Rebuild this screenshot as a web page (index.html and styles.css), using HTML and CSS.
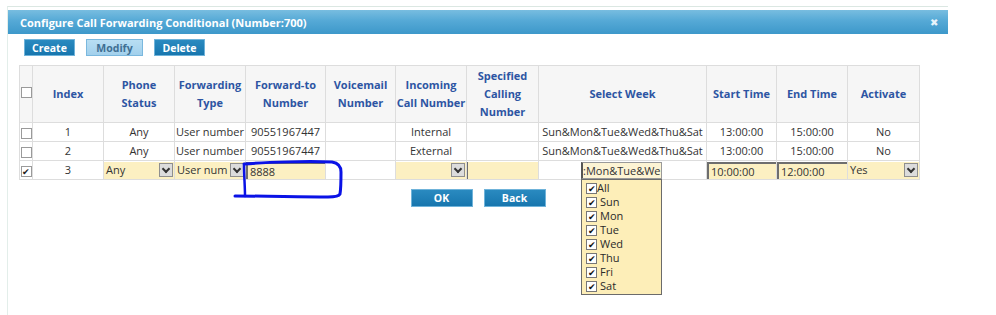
FILE: index.html
```html
<!DOCTYPE html>
<html lang="en">
<head>
    <meta charset="UTF-8">
    <title>Configure Call Forwarding Conditional</title>
    <link rel="stylesheet" href="styles.css">
</head>
<body>

    <div class="dialog">
        <div class="title-bar">
            <span class="title">Configure Call Forwarding Conditional (Number:700)</span>
            <span class="close">&#x2716;</span>
        </div>

        <div class="toolbar">
            <button class="btn">Create</button>
            <button class="btn btn-active">Modify</button>
            <button class="btn">Delete</button>
        </div>

        <table class="grid">
            <colgroup>
                <col style="width:13px"><col style="width:71px"><col style="width:71px">
                <col style="width:71px"><col style="width:80px"><col style="width:70px">
                <col style="width:71px"><col style="width:72px"><col style="width:168px">
                <col style="width:70px"><col style="width:71px"><col style="width:72px">
            </colgroup>
            <thead>
                <tr>
                    <th class="chk-cell"><span class="box"></span></th>
                    <th>Index</th>
                    <th>Phone<br>Status</th>
                    <th>Forwarding<br>Type</th>
                    <th>Forward-to<br>Number</th>
                    <th>Voicemail<br>Number</th>
                    <th>Incoming<br>Call Number</th>
                    <th>Specified<br>Calling<br>Number</th>
                    <th>Select Week</th>
                    <th>Start Time</th>
                    <th>End Time</th>
                    <th>Activate</th>
                </tr>
            </thead>
            <tbody>
                <tr>
                    <td class="chk-cell"><span class="box"></span></td>
                    <td>1</td>
                    <td>Any</td>
                    <td>User number</td>
                    <td>90551967447</td>
                    <td></td>
                    <td>Internal</td>
                    <td></td>
                    <td>Sun&amp;Mon&amp;Tue&amp;Wed&amp;Thu&amp;Sat</td>
                    <td>13:00:00</td>
                    <td>15:00:00</td>
                    <td>No</td>
                </tr>
                <tr>
                    <td class="chk-cell"><span class="box"></span></td>
                    <td>2</td>
                    <td>Any</td>
                    <td>User number</td>
                    <td>90551967447</td>
                    <td></td>
                    <td>External</td>
                    <td></td>
                    <td>Sun&amp;Mon&amp;Tue&amp;Wed&amp;Thu&amp;Sat</td>
                    <td>13:00:00</td>
                    <td>15:00:00</td>
                    <td>No</td>
                </tr>
                <tr class="edit-row">
                    <td class="chk-cell"><span class="box checked">&#x2714;</span></td>
                    <td>3</td>
                    <td class="ed"><div class="sel"><span class="sel-text">Any</span><span class="arrow"></span></div></td>
                    <td class="ed"><div class="sel"><span class="sel-text">User num</span><span class="arrow"></span></div></td>
                    <td class="ed"><div class="field">8888</div></td>
                    <td class="ed"></td>
                    <td class="ed"><div class="sel"><span class="sel-text"></span><span class="arrow"></span></div></td>
                    <td class="ed"><div class="field flat"></div></td>
                    <td class="ed week-cell">
                        <div class="week-field">:Mon&amp;Tue&amp;We</div>
                        <div class="week-list">
                            <label class="week-item first"><span class="tick">&#x2714;</span>All</label>
                            <label class="week-item"><span class="tick">&#x2714;</span>Sun</label>
                            <label class="week-item"><span class="tick">&#x2714;</span>Mon</label>
                            <label class="week-item"><span class="tick">&#x2714;</span>Tue</label>
                            <label class="week-item"><span class="tick">&#x2714;</span>Wed</label>
                            <label class="week-item"><span class="tick">&#x2714;</span>Thu</label>
                            <label class="week-item"><span class="tick">&#x2714;</span>Fri</label>
                            <label class="week-item"><span class="tick">&#x2714;</span>Sat</label>
                        </div>
                    </td>
                    <td class="ed"><div class="field">10:00:00</div></td>
                    <td class="ed"><div class="field">12:00:00</div></td>
                    <td class="ed"><div class="sel"><span class="sel-text">Yes</span><span class="arrow"></span></div></td>
                </tr>
            </tbody>
        </table>

        <div class="actions">
            <button class="btn btn-wide">OK</button>
            <button class="btn btn-wide">Back</button>
        </div>

        <!-- annotation drawn over the screenshot -->
        <svg class="scribble" width="120" height="45" viewBox="0 0 120 45">
            <path d="M16 6 C40 4 80 3 104 4 C110 5 113 8 113 14 C113 22 113 30 112 36 C111 38 108 39 100 39 C70 39 40 38 7 38"
                  fill="none" stroke="#0a12e6" stroke-width="3" stroke-linecap="round"/>
            <path d="M16 7 C16 18 17 28 17 38" fill="none" stroke="#0a12e6" stroke-width="2.5" stroke-linecap="round"/>
        </svg>
    </div>

</body>
</html>
```

FILE: styles.css
```css
/* Page */
body {
    margin: 0;
    font-family: "Open Sans", "Liberation Sans", sans-serif;
    font-size: 11px;
    color: #333333;
    background: #ffffff;
}

.dialog {
    position: relative;
    margin: 6px 0 0 7px;
    width: 941px;
    height: 309px;
    box-sizing: border-box;
    border-top: 1px solid #dbe7e2;
    border-left: 1px solid #e3eeea;
    padding-top: 3px;
}

/* Title bar */
.title-bar {
    height: 24px;
    display: flex;
    align-items: center;
    justify-content: space-between;
    padding: 0 10px 0 12px;
    background: linear-gradient(180deg, #78bde0 0%, #55a9d6 45%, #3d98ca 100%);
    color: #ffffff;
}

.title {
    font-weight: 700;
    font-size: 11px;
}

.close {
    font-size: 10px;
    color: #e8f4fb;
}

/* Buttons */
.toolbar {
    display: flex;
    gap: 11px;
    padding: 5px 0 0 16px;
    height: 17px;
}

.btn {
    font-family: "Open Sans", "Liberation Sans", sans-serif;
    font-size: 10.5px;
    font-weight: 700;
    color: #ffffff;
    height: 17px;
    width: 51px;
    padding: 0;
    border: 1px solid #6fb3da;
    background: linear-gradient(180deg, #2a8ac0, #1776ae);
    cursor: pointer;
}

.toolbar .btn:nth-child(2) {
    width: 57px;
}

.btn-active {
    background: linear-gradient(180deg, #b8def3, #a2d0ec);
    border-color: #7ab8de;
    color: #3f6f93;
}

/* Table */
.grid {
    margin: 9px 0 0 11px;
    width: 900px;
    border-collapse: collapse;
    table-layout: fixed;
}

.grid th,
.grid td {
    border: 1px solid #dddddd;
    text-align: center;
    padding: 0;
    white-space: nowrap;
    overflow: hidden;
}

.grid th {
    height: 56px;
    background: #f6f6f6;
    color: #2d55a3;
    font-weight: 700;
    font-size: 11px;
    line-height: 18px;
}

.grid td {
    height: 18px;
    line-height: 18px;
    font-size: 11px;
}

.chk-cell {
    text-align: center;
}

.box {
    display: inline-block;
    width: 9px;
    height: 9px;
    border: 1px solid #9a9a9a;
    background: #ffffff;
    vertical-align: middle;
    font-size: 9px;
    line-height: 9px;
    color: #222222;
}

.grid th .box {
    margin-top: -6px;
}

/* Edit row */
.edit-row td.ed {
    text-align: left;
    vertical-align: middle;
}

.sel {
    display: flex;
    align-items: center;
    height: 17px;
    background: #fcf0c2;
}

.sel-text {
    flex: 1;
    padding-left: 2px;
    overflow: hidden;
}

.arrow {
    width: 14px;
    height: 14px;
    margin-right: 1px;
    border: 1px solid #8f8f8f;
    background: #dcdcdc;
    box-sizing: border-box;
    position: relative;
}

.arrow::after {
    content: "";
    position: absolute;
    left: 3px;
    top: 2px;
    width: 4px;
    height: 4px;
    border-right: 2px solid #333333;
    border-bottom: 2px solid #333333;
    transform: rotate(45deg);
}

.field {
    height: 17px;
    line-height: 16px;
    padding-left: 2px;
    box-sizing: border-box;
    background: #fcf0c2;
    border-top: 2px solid #6e6e6e;
    border-left: 2px solid #6e6e6e;
}

.field.flat {
    border-top: none;
    border-left: 1px solid #6e6e6e;
}

.week-cell {
    position: relative;
    overflow: visible !important;
}

.week-field {
    margin-left: 42px;
    width: 81px;
    height: 17px;
    line-height: 16px;
    box-sizing: border-box;
    border: 1px solid #9a9a9a;
    border-left: 2px solid #555555;
    background: #fdf4d4;
    overflow: hidden;
}

.week-list {
    position: absolute;
    left: 42px;
    top: 18px;
    width: 81px;
    height: 116px;
    box-sizing: border-box;
    padding-top: 1px;
    border: 1px solid #6b6b6b;
    background: #fdeeb8;
    z-index: 2;
}

.week-item {
    display: flex;
    align-items: center;
    height: 14px;
    padding-left: 4px;
    font-size: 11px;
    color: #2a2a2a;
    gap: 3px;
}

.week-item.first {
    gap: 0;
}

.tick {
    display: inline-block;
    width: 9px;
    height: 9px;
    border: 1px solid #777777;
    background: #ffffff;
    font-size: 9px;
    line-height: 9px;
    text-align: center;
    color: #111111;
}

/* Bottom buttons */
.actions {
    display: flex;
    justify-content: center;
    gap: 11px;
    margin-top: 9px;
}

.btn-wide {
    width: 62px;
    height: 18px;
}

/* Hand-drawn mark */
.scribble {
    position: absolute;
    left: 220px;
    top: 151px;
    z-index: 3;
}
```
